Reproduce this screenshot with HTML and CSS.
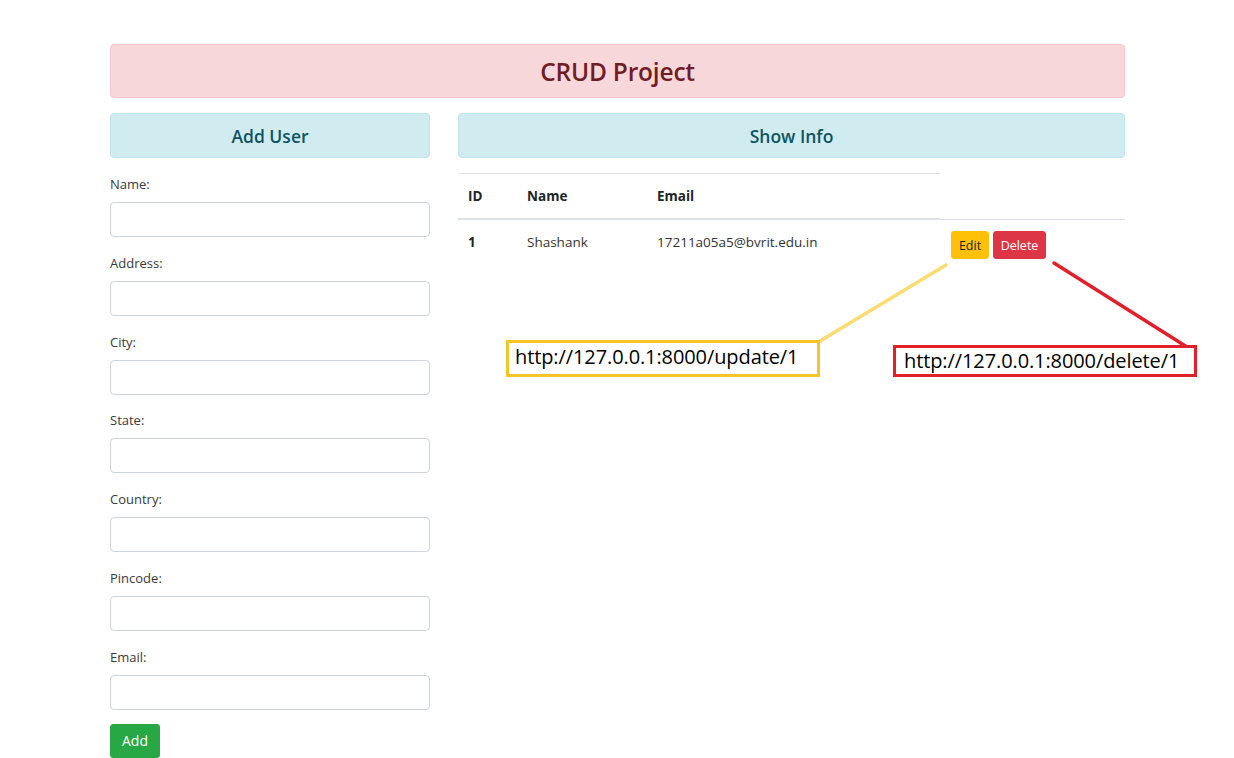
FILE: index.html
```html
<!DOCTYPE html>
<html lang="en">
<head>
<meta charset="utf-8">
<title>CRUD Project</title>
<link rel="stylesheet" href="styles.css">
</head>
<body>
<div class="page">
  <div class="alert-title">CRUD Project</div>
  <div class="row">
    <div class="left">
      <div class="info-box">Add User</div>
      <form class="form">
        <div class="group"><label>Name:</label><input type="text"></div>
        <div class="group"><label>Address:</label><input type="text"></div>
        <div class="group"><label>City:</label><input type="text"></div>
        <div class="group"><label>State:</label><input type="text"></div>
        <div class="group"><label>Country:</label><input type="text"></div>
        <div class="group"><label>Pincode:</label><input type="text"></div>
        <div class="group"><label>Email:</label><input type="text"></div>
        <button type="button" class="btn btn-add">Add</button>
      </form>
    </div>
    <div class="right">
      <div class="info-box">Show Info</div>
      <table class="table">
        <thead>
          <tr><th class="c-id">ID</th><th class="c-name">Name</th><th class="c-email">Email</th></tr>
        </thead>
        <tbody>
          <tr>
            <td class="c-id strong">1</td>
            <td class="c-name">Shashank</td>
            <td class="c-email">17211a05a5@bvrit.edu.in</td>
            <td class="c-act"><button class="btn btn-edit">Edit</button><button class="btn btn-del">Delete</button></td>
          </tr>
        </tbody>
      </table>
    </div>
  </div>
</div>
<svg class="lines" width="1234" height="758" viewBox="0 0 1234 758">
  <line x1="946" y1="265" x2="820" y2="341" stroke="#fcdc72" stroke-width="3.5" stroke-linecap="round"/>
  <line x1="1054" y1="263" x2="1187" y2="347" stroke="#e0202a" stroke-width="3.5" stroke-linecap="round"/>
</svg>
<div class="url url-update">http://127.0.0.1:8000/update/1</div>
<div class="url url-delete">http://127.0.0.1:8000/delete/1</div>
</body>
</html>
```
FILE: styles.css
```css
* { box-sizing: border-box; }
html, body { margin: 0; padding: 0; background: #fff; }
body {
  font-family: "Open Sans", "Noto Sans", sans-serif;
  color: #212529;
  font-size: 14px;
  width: 1234px;
  height: 758px;
  overflow: hidden;
  position: relative;
}
.page {
  width: 1015px;
  margin-left: 110px;
  padding-top: 44px;
}
.alert-title {
  height: 54px;
  background: #f8d7da;
  border: 1px solid #f5c6cb;
  border-radius: 4px;
  color: #721c24;
  font-size: 24.5px;
  font-weight: 600;
  display: flex;
  align-items: center;
  justify-content: center;
  letter-spacing: -0.2px;
}
.row {
  display: grid;
  grid-template-columns: 320px 667px;
  column-gap: 28px;
  margin-top: 15px;
}
.info-box {
  height: 45px;
  background: #d1ecf1;
  border: 1px solid #bee5eb;
  border-radius: 4px;
  color: #0c5460;
  font-size: 17.5px;
  font-weight: 600;
  display: flex;
  align-items: center;
  justify-content: center;
}
.form { margin-top: 16px; display: flex; flex-direction: column; }
.group { display: flex; flex-direction: column; margin-bottom: 15.8px; }
.group:last-of-type { margin-bottom: 14px; }
.group label {
  font-size: 13px;
  line-height: 20px;
  color: #3a3a3a;
  margin-bottom: 8px;
}
.group input {
  height: 35px;
  width: 320px;
  border: 1px solid #ced4da;
  border-radius: 4px;
  background: #fff;
  font: inherit;
  padding: 4px 10px;
}
.btn {
  font-family: inherit;
  border: 1px solid transparent;
  border-radius: 3px;
  cursor: pointer;
}
.btn-add {
  align-self: flex-start;
  width: 50px;
  height: 34px;
  background: #28a745;
  border-color: #28a745;
  color: #fff;
  font-size: 14px;
  padding: 0;
}
.table {
  margin-top: 15px;
  width: 667px;
  border-collapse: collapse;
  font-size: 13.5px;
}
.table th, .table td {
  text-align: left;
  vertical-align: top;
  padding: 12px 10px;
  border-top: 1px solid #dee2e6;
}
.table th {
  font-weight: 700;
  font-size: 13.5px;
  line-height: 20px;
  border-bottom: 2px solid #dee2e6;
}
.table td { line-height: 20px; color: #333; }
.table td.strong { font-weight: 700; color: #212529; }
.c-id { width: 59px; }
.c-name { width: 130px; }
.c-email { width: 293px; }
.table td.c-act { padding: 11px 10px 12px 11px; display: flex; gap: 4px; }
.btn-edit, .btn-del {
  height: 28px;
  font-size: 12.5px;
  padding: 0;
}
.btn-edit { background: #ffc107; border-color: #ffc107; color: #212529; width: 38px; }
.btn-del { background: #dc3545; border-color: #dc3545; color: #fff; width: 53px; }
.lines { position: absolute; left: 0; top: 0; pointer-events: none; }
.url {
  position: absolute;
  background: #fff;
  border: 3px solid;
  color: #000;
  font-size: 20px;
  line-height: 26px;
  padding: 1px 0 0 6px;
  white-space: nowrap;
  letter-spacing: -0.1px;
}
.url-update { left: 506px; top: 340px; width: 314px; height: 37px; border-color: #f7c525; }
.url-delete { left: 893px; top: 345px; width: 304px; height: 32px; border-color: #e0202a; padding: 0 0 0 8px; line-height: 26px; }
```
